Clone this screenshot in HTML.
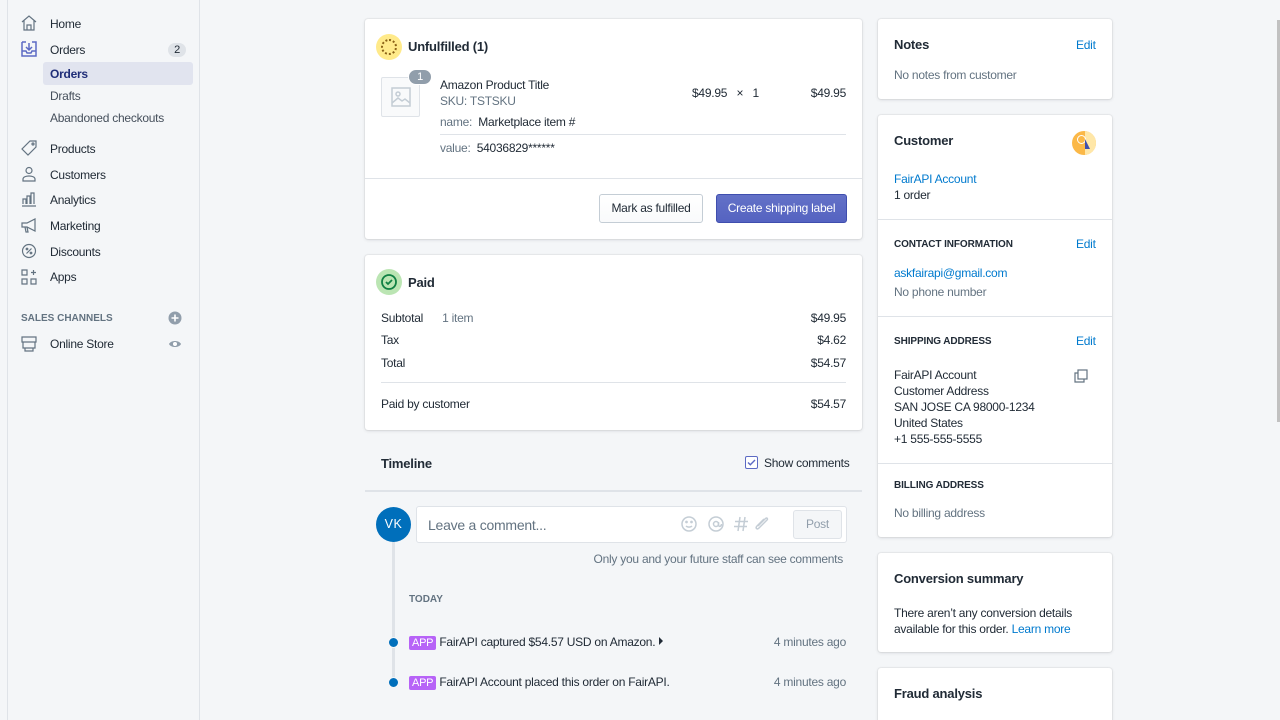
<!DOCTYPE html>
<html><head><meta charset="utf-8"><style>
*{box-sizing:border-box;margin:0;padding:0}
html{overflow:hidden;height:720px}
body{width:1280px;height:720px;overflow:hidden;background:#f4f6f8;font-family:"Liberation Sans",sans-serif;font-size:12px;letter-spacing:-0.25px;color:#212b36;position:relative}
.a{position:absolute;white-space:nowrap}
.sb{position:absolute;left:7px;top:0;width:193px;height:720px;border-left:1px solid #dfe3e8;border-right:1px solid #dfe3e8;background:#f4f6f8}
.nav{position:absolute;left:50px;color:#212b36}
.ic{position:absolute;left:21px;width:16px;height:16px}
.card{position:absolute;background:#fff;border-radius:3px;box-shadow:0 0 0 1px rgba(63,63,68,.05),0 1px 3px rgba(63,63,68,.15)}
.hr{position:absolute;height:1px;background:#dfe3e8}
.g{color:#637381}
.b{color:#007ace}
.h{font-weight:bold;font-size:13px;letter-spacing:-0.2px}
.cap{font-weight:bold;font-size:10px;color:#212b36;letter-spacing:-0.1px}
.app{background:#b763f7;color:#fff;font-size:11px;padding:1px 3px;border-radius:2px}
</style></head><body>
<div class="sb"></div>
<svg class="ic" style="top:15px" viewBox="0 0 16 16" fill="none" stroke="#637381" stroke-width="1.2"><path d="M1 7L8 1l7 6M3 5v10h10V5M6 15v-5h4v5"/></svg>
<div class="nav" style="top:17px">Home</div>
<svg class="ic" style="top:41px" viewBox="0 0 16 16" fill="none" stroke="#5c6ac4" stroke-width="1.5"><path d="M1 1h4M11 1h4v14H1V1M1 10h4l1 2h4l1-2h4M8 2v7M5 6l3 3 3-3"/></svg>
<div class="nav" style="top:43px">Orders</div>
<div class="a" style="left:168px;top:43px;width:18px;height:14px;border-radius:7px;background:#dfe3e8;font-size:11px;text-align:center;line-height:14px">2</div>
<div class="a" style="left:43px;top:62px;width:150px;height:23px;background:#e1e4ef;border-radius:3px"></div>
<div class="nav" style="top:67px;font-weight:bold;color:#202e78">Orders</div>
<div class="nav" style="top:89px;color:#454f5b">Drafts</div>
<div class="nav" style="top:111px;color:#454f5b">Abandoned checkouts</div>
<svg class="ic" style="top:140px" viewBox="0 0 16 16" fill="none" stroke="#637381" stroke-width="1.2"><path d="M9 1h6v6L7 15 1 9z"/><circle cx="12" cy="4" r="1"/></svg>
<div class="nav" style="top:142px">Products</div>
<svg class="ic" style="top:166px" viewBox="0 0 16 16" fill="none" stroke="#637381" stroke-width="1.2"><circle cx="8" cy="4.5" r="3"/><path d="M2 15v-2c0-2 3-3 6-3s6 1 6 3v2z"/></svg>
<div class="nav" style="top:168px">Customers</div>
<svg class="ic" style="top:191px" viewBox="0 0 16 16" fill="none" stroke="#637381" stroke-width="1.2"><path d="M1 15h14M2 13V8h3v5M6 13V5h3v8M10 13V2h3v11"/></svg>
<div class="nav" style="top:193px">Analytics</div>
<svg class="ic" style="top:217px" viewBox="0 0 16 16" fill="none" stroke="#637381" stroke-width="1.2"><path d="M1 6h5l8-4v12l-8-4H1zM4 10l1 5h2l-1-5"/></svg>
<div class="nav" style="top:219px">Marketing</div>
<svg class="ic" style="top:243px" viewBox="0 0 16 16" fill="none" stroke="#637381" stroke-width="1.2"><circle cx="8" cy="8" r="6.5"/><path d="M5.5 10.5l5-5"/><circle cx="6" cy="6" r=".8"/><circle cx="10" cy="10" r=".8"/></svg>
<div class="nav" style="top:245px">Discounts</div>
<svg class="ic" style="top:269px" viewBox="0 0 16 16" fill="none" stroke="#637381" stroke-width="1.2"><path d="M1 1h5v5H1zM1 10h5v5H1zM10 10h5v5h-5zM12.5 1v5M10 3.5h5"/></svg>
<div class="nav" style="top:270px">Apps</div>
<div class="a" style="left:21px;top:313px;font-size:10px;font-weight:bold;color:#637381;letter-spacing:0">SALES CHANNELS</div>
<svg class="a" style="left:168px;top:311px" width="14" height="14" viewBox="0 0 14 14"><circle cx="7" cy="7" r="6.5" fill="#919eab"/><path d="M7 3.5v7M3.5 7h7" stroke="#fff" stroke-width="1.6"/></svg>
<svg class="ic" style="top:336px" viewBox="0 0 16 16" fill="none" stroke="#637381" stroke-width="1.2"><path d="M1 1h14v5H1zM2 6v6h12V6M4 12v3h8v-3"/></svg>
<div class="nav" style="top:337px">Online Store</div>
<svg class="a" style="left:168px;top:338px" width="14" height="12" viewBox="0 0 14 12"><path d="M1 6c2-4 10-4 12 0-2 4-10 4-12 0z" fill="#919eab"/><circle cx="7" cy="6" r="2" fill="#fff"/></svg>

<!-- Unfulfilled -->
<div class="card" style="left:365px;top:19px;width:497px;height:220px"></div>
<div class="a" style="left:376px;top:34px;width:26px;height:26px;border-radius:13px;background:#ffea8a"></div>
<div class="a" style="left:381px;top:39px;width:16px;height:16px;border-radius:8px;border:2px dotted #8a6116"></div>
<div class="a h" style="left:408px;top:39px">Unfulfilled (1)</div>
<div class="a" style="left:381px;top:77px;width:39px;height:40px;border:1px solid #dfe3e8;border-radius:2px;background:#f9fafb"></div>
<svg class="a" style="left:391px;top:87px" width="20" height="20" viewBox="0 0 20 20" fill="none" stroke="#c4cdd5" stroke-width="1.5"><rect x="1" y="1" width="18" height="18"/><circle cx="7" cy="7" r="2"/><path d="M1 16l6-5 4 3 3-2 5 4"/></svg>
<div class="a" style="left:408px;top:69px;width:24px;height:16px;border-radius:8px;background:#919eab;border:1px solid #fff;color:#fff;font-size:11px;text-align:center;line-height:14px">1</div>
<div class="a" style="left:440px;top:78px">Amazon Product Title</div>
<div class="a g" style="left:440px;top:94px">SKU: TSTSKU</div>
<div class="a" style="left:440px;top:115px"><span class="g">name:</span>&nbsp; Marketplace item #</div>
<div class="hr" style="left:440px;top:134px;width:406px"></div>
<div class="a" style="left:440px;top:141px"><span class="g">value:</span>&nbsp; 54036829******</div>
<div class="a" style="left:692px;top:86px">$49.95 &nbsp;&nbsp;×&nbsp;&nbsp; 1</div>
<div class="a" style="right:434px;top:86px">$49.95</div>
<div class="hr" style="left:365px;top:178px;width:497px"></div>
<div class="a" style="left:599px;top:194px;width:104px;height:29px;border:1px solid #c4cdd5;border-radius:3px;background:linear-gradient(#fff,#f9fafb);text-align:center;line-height:27px">Mark as fulfilled</div>
<div class="a" style="left:716px;top:194px;width:131px;height:29px;border:1px solid #3f4eae;border-radius:3px;background:linear-gradient(#6371c7,#5563c1);color:#fff;text-align:center;line-height:27px">Create shipping label</div>

<!-- Paid -->
<div class="card" style="left:365px;top:255px;width:497px;height:175px"></div>
<div class="a" style="left:376px;top:269px;width:26px;height:26px;border-radius:13px;background:#bbe5b3"></div>
<svg class="a" style="left:380px;top:273px" width="18" height="18" viewBox="0 0 18 18" fill="none" stroke="#108043" stroke-width="1.8"><circle cx="9" cy="9" r="7"/><path d="M6 9l2 2 4-4"/></svg>
<div class="a h" style="left:408px;top:275px">Paid</div>
<div class="a" style="left:381px;top:311px">Subtotal <span class="g" style="margin-left:16px">1 item</span></div>
<div class="a" style="right:434px;top:311px">$49.95</div>
<div class="a" style="left:381px;top:333px">Tax</div>
<div class="a" style="right:434px;top:333px">$4.62</div>
<div class="a" style="left:381px;top:356px">Total</div>
<div class="a" style="right:434px;top:356px">$54.57</div>
<div class="hr" style="left:381px;top:382px;width:465px"></div>
<div class="a" style="left:381px;top:397px">Paid by customer</div>
<div class="a" style="right:434px;top:397px">$54.57</div>

<!-- Timeline -->
<div class="a h" style="left:381px;top:456px">Timeline</div>
<div class="a" style="left:745px;top:456px;width:13px;height:13px;border:1px solid #5c6ac4;border-radius:2px;background:#fff"></div>
<svg class="a" style="left:747px;top:458px" width="9" height="9" viewBox="0 0 9 9"><path d="M1 4.5l2.3 2.3L8 2" fill="none" stroke="#5c6ac4" stroke-width="1.4"/></svg>
<div class="a" style="left:764px;top:456px;color:#212b36">Show comments</div>
<div class="hr" style="left:365px;top:490px;width:497px;height:2px"></div>
<div class="a" style="left:392px;top:530px;width:3px;height:155px;background:#dfe3e8"></div>
<div class="a" style="left:376px;top:507px;width:35px;height:35px;border-radius:18px;background:#006fbb;color:#fff;text-align:center;line-height:35px;font-size:12.5px;letter-spacing:0.5px">VK</div>
<div class="a" style="left:416px;top:506px;width:431px;height:37px;background:#fff;border:1px solid #dfe3e8;border-radius:3px"></div>
<div class="a g" style="left:428px;top:517px;font-size:14px">Leave a comment...</div>
<svg class="a" style="left:680px;top:515px" width="90" height="18" viewBox="0 0 90 18" fill="none" stroke="#c4cdd5" stroke-width="1.5"><circle cx="9" cy="9" r="7"/><circle cx="6.5" cy="7" r=".6"/><circle cx="11.5" cy="7" r=".6"/><path d="M6 11c1.5 1.5 4.5 1.5 6 0"/><circle cx="36" cy="9" r="7"/><circle cx="36" cy="9" r="2.5"/><path d="M38.5 7v3c0 2 3 2 3-1"/><path d="M60 2l-2 14M65 2l-2 14M55 6.5h13M54 11.5h13"/><path d="M84 4l-7 7c-2 2 0 4 2 2l8-8c1-1 0-3-1.5-1.5L78 11"/></svg>
<div class="a" style="left:793px;top:510px;width:49px;height:29px;border:1px solid #dfe3e8;border-radius:3px;background:#f4f6f8;color:#919eab;text-align:center;line-height:27px">Post</div>
<div class="a g" style="right:437px;top:552px">Only you and your future staff can see comments</div>
<div class="a" style="left:409px;top:594px;font-size:10px;font-weight:bold;color:#637381;letter-spacing:0">TODAY</div>
<div class="a" style="left:388px;top:637px;width:11px;height:11px;border-radius:6px;background:#006fbb;border:1px solid #f4f6f8"></div>
<div class="a" style="left:409px;top:635px"><span class="app">APP</span> FairAPI captured $54.57 USD on Amazon.</div>
<svg class="a" style="left:658px;top:637px" width="6" height="8"><path d="M1 0l4 4-4 4z" fill="#212b36"/></svg>
<div class="a g" style="right:434px;top:635px">4 minutes ago</div>
<div class="a" style="left:388px;top:677px;width:11px;height:11px;border-radius:6px;background:#006fbb;border:1px solid #f4f6f8"></div>
<div class="a" style="left:409px;top:675px"><span class="app">APP</span> FairAPI Account placed this order on FairAPI.</div>
<div class="a g" style="right:434px;top:675px">4 minutes ago</div>

<!-- Right column -->
<div class="card" style="left:878px;top:19px;width:234px;height:80px"></div>
<div class="a h" style="left:894px;top:37px">Notes</div>
<div class="a b" style="left:1076px;top:38px">Edit</div>
<div class="a g" style="left:894px;top:68px">No notes from customer</div>

<div class="card" style="left:878px;top:115px;width:234px;height:422px"></div>
<div class="a h" style="left:894px;top:133px">Customer</div>
<div class="a" style="left:1072px;top:131px;width:24px;height:24px;border-radius:12px;background:#fbb847;overflow:hidden"><div style="position:absolute;left:13px;top:0;width:11px;height:24px;background:#ffe7a8"></div><div style="position:absolute;left:5px;top:4px;width:9px;height:9px;border-radius:5px;border:1.5px solid #fff"></div><div style="position:absolute;left:13px;top:8px;width:0;height:0;border-left:5px solid #3f4eae;border-top:10px solid transparent"></div></div>
<div class="a b" style="left:894px;top:172px">FairAPI Account</div>
<div class="a" style="left:894px;top:188px">1 order</div>
<div class="hr" style="left:878px;top:219px;width:234px"></div>
<div class="a cap" style="left:894px;top:239px">CONTACT INFORMATION</div>
<div class="a b" style="left:1076px;top:237px">Edit</div>
<div class="a b" style="left:894px;top:266px">askfairapi@gmail.com</div>
<div class="a g" style="left:894px;top:285px">No phone number</div>
<div class="hr" style="left:878px;top:316px;width:234px"></div>
<div class="a cap" style="left:894px;top:336px">SHIPPING ADDRESS</div>
<div class="a b" style="left:1076px;top:334px">Edit</div>
<svg class="a" style="left:1074px;top:369px" width="14" height="14" viewBox="0 0 14 14" fill="none" stroke="#637381" stroke-width="1.2"><rect x="4" y="1" width="9" height="9"/><path d="M4 4H1v9h9v-3"/></svg>
<div class="a" style="left:894px;top:367px;line-height:16px;white-space:normal;width:200px">FairAPI Account<br>Customer Address<br>SAN JOSE CA 98000-1234<br>United States<br>+1 555-555-5555</div>
<div class="hr" style="left:878px;top:463px;width:234px"></div>
<div class="a cap" style="left:894px;top:480px">BILLING ADDRESS</div>
<div class="a g" style="left:894px;top:506px">No billing address</div>

<div class="card" style="left:878px;top:553px;width:234px;height:99px"></div>
<div class="a h" style="left:894px;top:571px">Conversion summary</div>
<div class="a" style="left:894px;top:605px;line-height:16px">There aren’t any conversion details<br>available for this order. <span class="b">Learn more</span></div>

<div class="card" style="left:878px;top:668px;width:234px;height:60px"></div>
<div class="a h" style="left:894px;top:686px">Fraud analysis</div>

<div class="a" style="left:1277px;top:20px;width:3px;height:402px;background:#c1c1c1"></div>
</body></html>
